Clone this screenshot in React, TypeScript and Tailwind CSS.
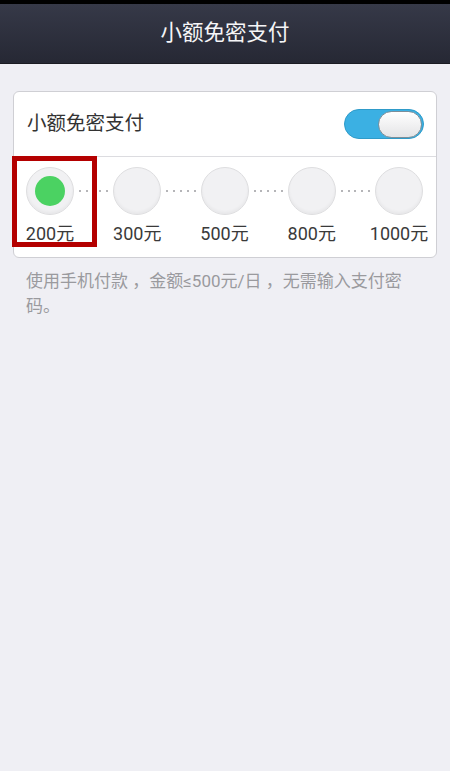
import React from "react";

const amounts = ["200元", "300元", "500元", "800元", "1000元"];

function Dots() {
  return (
    <div className="flex h-12 flex-1 items-center justify-between px-[5px]">
      {[0, 1, 2, 3, 4].map((i) => (
        <span key={i} className="h-[2px] w-[2px] rounded-full bg-[#9c9ca0]" />
      ))}
    </div>
  );
}

export default function App() {
  return (
    <div
      className="flex h-[771px] flex-col bg-[#efeff4]"
      style={{ fontFamily: '"Roboto", "Noto Sans CJK SC", sans-serif' }}
    >
      {/* status strip */}
      <div className="h-[4px] bg-black" />

      {/* header */}
      <header className="flex h-[60px] items-center justify-center border-b border-[#1b1c22] bg-gradient-to-b from-[#363948] to-[#262834]">
        <h1 className="text-[21.5px] text-[#f5f5f7]">小额免密支付</h1>
      </header>

      {/* card */}
      <div className="relative mx-[13px] mt-[27px] rounded-[6px] border border-[#cfcfd4] bg-white">
        <div className="flex h-[65px] items-center justify-between border-b border-[#dcdce0] pl-[13px] pr-[12px]">
          <span className="text-[19.5px] text-[#333]">小额免密支付</span>
          <div className="flex h-[30px] w-[80px] items-center justify-end rounded-full border border-[#2f9bc9] bg-[#3bb0e3] pr-[1px]">
            <div className="h-[27px] w-[44px] rounded-full border border-[#7d8e99] bg-gradient-to-b from-white to-[#e4e4e6]" />
          </div>
        </div>

        <div className="flex pb-[12px] pl-[12px] pr-[13px] pt-[10px]">
          {amounts.map((label, i) => (
            <React.Fragment key={label}>
              {i > 0 && <Dots />}
              <div className="flex w-12 flex-col items-center">
                <div className="flex h-12 w-12 items-center justify-center rounded-full border border-[#dedee0] bg-[#f1f1f3] shadow-[inset_0_-2px_3px_rgba(0,0,0,0.04)]">
                  {i === 0 && <div className="h-[30px] w-[30px] rounded-full bg-[#4bd262]" />}
                </div>
                <span className="mt-[8px] whitespace-nowrap text-[18px] leading-[22px] text-[#3a3a3a]">
                  {label}
                </span>
              </div>
            </React.Fragment>
          ))}
        </div>

        {/* highlight annotation */}
        <div className="pointer-events-none absolute left-[-2px] top-[64px] h-[91px] w-[85px] border-[5px] border-[#b40000]" />
      </div>

      <p className="mt-[11px] px-[26px] text-[17px] leading-[25px] text-[#9a9a9e]">
        <span className="whitespace-nowrap">使用手机付款 ，金额≤500元/日 ，无需输入支付密</span>
        <br />
        码。
      </p>
    </div>
  );
}
